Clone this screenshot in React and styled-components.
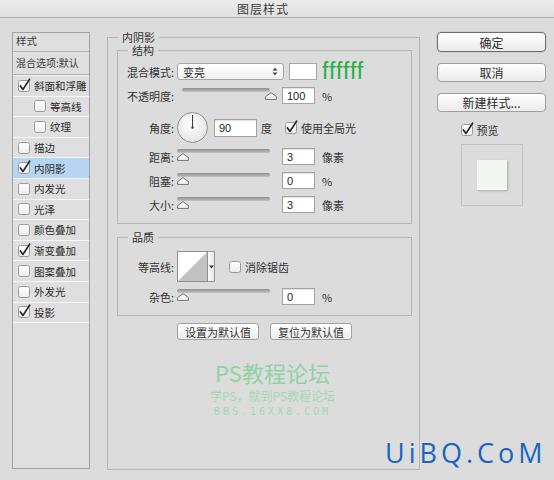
import React from 'react'
import styled, { createGlobalStyle } from 'styled-components'

const GlobalStyle = createGlobalStyle`
  html, body {
    margin: 0;
    padding: 0;
    background: #dcdcdc;
  }
  body {
    font-family: "Noto Sans CJK SC", "Liberation Sans", sans-serif;
    font-size: 11px;
    color: #2c2c2c;
  }
`

const effects = [
  { name: '斜面和浮雕', checked: true },
  { name: '等高线', sub: true },
  { name: '纹理', sub: true },
  { name: '描边' },
  { name: '内阴影', checked: true, active: true },
  { name: '内发光' },
  { name: '光泽' },
  { name: '颜色叠加' },
  { name: '渐变叠加', checked: true },
  { name: '图案叠加' },
  { name: '外发光' },
  { name: '投影', checked: true },
]

const Check = ({ on }) => (
  <CheckSvg width="12" height="12" viewBox="0 0 12 12">
    <defs>
      <linearGradient id="cbg" x1="0" y1="0" x2="0" y2="1">
        <stop offset="0" stopColor="#ffffff" />
        <stop offset="1" stopColor="#ececec" />
      </linearGradient>
    </defs>
    <rect x="0.5" y="0.5" width="11" height="11" rx="2" fill="url(#cbg)" stroke="#9a9a9a" />
    {on && <path d="M2.4 5.9 L5 9.4 L11.6 -0.8" fill="none" stroke="#262626" strokeWidth="1.7" strokeLinecap="round" strokeLinejoin="round" />}
  </CheckSvg>
)

const Slider = ({ width, thumb, offset }) => (
  <SliderWrap $w={width} $ml={offset}>
    <Track />
    <Thumb $right={thumb === 'right'} width="12" height="8" viewBox="0 0 12 8">
      <path d="M6 0.6 L11.4 4.6 L11.4 7.4 L0.6 7.4 L0.6 4.6 Z" fill="#f4f4f4" stroke="#6f6f6f" strokeLinejoin="round" />
    </Thumb>
  </SliderWrap>
)

const Dial = () => (
  <svg width="31" height="31" viewBox="0 0 31 31">
    <defs>
      <radialGradient id="dial" cx="0.45" cy="0.4" r="0.65">
        <stop offset="0" stopColor="#ffffff" />
        <stop offset="1" stopColor="#e2e2e2" />
      </radialGradient>
    </defs>
    <circle cx="15.5" cy="15.5" r="15" fill="url(#dial)" stroke="#8e8e8e" />
    <line x1="15.5" y1="15.5" x2="15.5" y2="3" stroke="#3a3a3a" strokeWidth="1" />
    <circle cx="15.5" cy="15.5" r="1.2" fill="#3a3a3a" />
  </svg>
)

const App = () => {
  return (
    <Window>
      <GlobalStyle />
      <TitleBar>图层样式</TitleBar>
      <Body>
        <StylePanel>
          <PanelHead>样式</PanelHead>
          <PanelBlend>混合选项:默认</PanelBlend>
          <EffectList>
            {effects.map((e) => (
              <EffectRow key={e.name} $sub={e.sub} $active={e.active}>
                <Check on={e.checked} />
                <span>{e.name}</span>
              </EffectRow>
            ))}
          </EffectList>
        </StylePanel>

        <Main>
          <GroupTitle $ml={1}>内阴影</GroupTitle>
          <Group>
            <GroupTitle $ml={6}>结构</GroupTitle>
            <Row $h={17}>
              <Label>混合模式:</Label>
              <Select>
                <span>变亮</span>
                <svg width="6" height="9" viewBox="0 0 6 9">
                  <path d="M0.5 3.5 L3 0.8 L5.5 3.5 Z M0.5 5.5 L3 8.2 L5.5 5.5 Z" fill="#444" />
                </svg>
              </Select>
              <Swatch />
              <ColorNote>ffffff</ColorNote>
            </Row>
            <Row $h={17} $mt={7}>
              <Label>不透明度:</Label>
              <Slider width={88} thumb="right" offset={5} />
              <NumBox defaultValue="100" readOnly />
              <Unit>%</Unit>
            </Row>
            <Row $h={31} $mt={8}>
              <Label>角度:</Label>
              <Dial />
              <NumBox $w={43} $h={18} $ml={6} defaultValue="90" readOnly />
              <Unit $ml={4}>度</Unit>
              <CheckLabel $ml={13}>
                <Check on />
                <span>使用全局光</span>
              </CheckLabel>
            </Row>
            <Row $h={17} $mt={5}>
              <Label>距离:</Label>
              <Slider width={93} />
              <NumBox defaultValue="3" readOnly />
              <Unit>像素</Unit>
            </Row>
            <Row $h={17} $mt={7}>
              <Label>阻塞:</Label>
              <Slider width={93} />
              <NumBox defaultValue="0" readOnly />
              <Unit>%</Unit>
            </Row>
            <Row $h={17} $mt={7}>
              <Label>大小:</Label>
              <Slider width={93} />
              <NumBox defaultValue="3" readOnly />
              <Unit>像素</Unit>
            </Row>
          </Group>

          <Group $mt={7} $pt={8}>
            <GroupTitle $ml={6}>品质</GroupTitle>
            <Row $h={31}>
              <Label>等高线:</Label>
              <Contour>
                <ContourBox>
                  <svg width="29" height="29" viewBox="0 0 29 29">
                    <polygon points="0,29 29,0 29,29" fill="#c2c2c2" />
                  </svg>
                </ContourBox>
                <ContourDrop>
                  <svg width="5" height="4" viewBox="0 0 5 4">
                    <path d="M0 0.5 L5 0.5 L2.5 3.5 Z" fill="#333" />
                  </svg>
                </ContourDrop>
              </Contour>
              <CheckLabel $ml={14}>
                <Check />
                <span>消除锯齿</span>
              </CheckLabel>
            </Row>
            <Row $h={17} $mt={6}>
              <Label>杂色:</Label>
              <Slider width={93} />
              <NumBox defaultValue="0" readOnly />
              <Unit>%</Unit>
            </Row>
          </Group>

          <ButtonRow>
            <SmallButton>设置为默认值</SmallButton>
            <SmallButton>复位为默认值</SmallButton>
          </ButtonRow>

          <Watermark>
            <MarkTitle>PS教程论坛</MarkTitle>
            <MarkLine>学PS，就到PS教程论坛</MarkLine>
            <MarkUrl>BBS.16XX8.COM</MarkUrl>
          </Watermark>
        </Main>

        <Side>
          <DialogButton $primary>确定</DialogButton>
          <DialogButton>取消</DialogButton>
          <DialogButton>新建样式...</DialogButton>
          <PreviewArea>
            <CheckLabel $h={14}>
              <Check on />
              <span>预览</span>
            </CheckLabel>
            <PreviewBox>
              <PreviewSquare />
            </PreviewBox>
          </PreviewArea>
        </Side>
      </Body>
      <SiteMark>UiBQ.CoM</SiteMark>
    </Window>
  )
}

const Window = styled.div`
  position: relative;
  width: 554px;
  height: 480px;
  overflow: hidden;
  background: #dcdcdc;
`

const TitleBar = styled.div`
  height: 17px;
  border-bottom: 1px solid #b2b2b2;
  background: linear-gradient(#ececec, #dfdfdf);
  display: flex;
  align-items: center;
  justify-content: center;
  padding-right: 28px;
  font-size: 12px;
  color: #3a3a3a;
  letter-spacing: 1px;
`

const Body = styled.div`
  display: flex;
  align-items: flex-start;
  padding-left: 12px;
`

const StylePanel = styled.div`
  width: 78px;
  height: 437px;
  margin-top: 14px;
  box-sizing: border-box;
  border: 1px solid #a2a2a2;
  background: #dfdfdf;
  display: flex;
  flex-direction: column;
  font-size: 10.5px;
  white-space: nowrap;
`

const PanelHead = styled.div`
  height: 19px;
  box-sizing: border-box;
  border-bottom: 1px solid #b3b3b3;
  padding: 0 0 3px 3px;
  display: flex;
  align-items: center;
  color: #3c3c3c;
`

const PanelBlend = styled(PanelHead)`
  height: 23px;
  padding: 0 0 1px 3px;
  font-size: 10px;
  box-shadow: 0 1px 0 #f2f2f2;
`

const EffectList = styled.div`
  margin-top: 1px;
  display: flex;
  flex-direction: column;
`

const EffectRow = styled.div`
  height: 20.6px;
  box-sizing: border-box;
  display: flex;
  align-items: center;
  gap: 4px;
  padding-left: ${(p) => (p.$sub ? 21 : 5)}px;
  background: ${(p) => (p.$active ? '#b7d5f3' : 'transparent')};
  border-bottom: 1px solid rgba(255, 255, 255, 0.75);
  color: #2a2a2a;
`

const CheckSvg = styled.svg`
  flex: none;
  overflow: visible;
`

const Main = styled.fieldset`
  width: 313px;
  height: 439px;
  margin: 13px 0 0 17px;
  padding: 1px 7px 0 9px;
  box-sizing: border-box;
  border: 1px solid #b6b6b6;
  min-width: 0;
`

const Group = styled.fieldset`
  margin: ${(p) => p.$mt || 0}px 0 0;
  padding: ${(p) => p.$pt || 7}px 0 10px 4px;
  border: 1px solid #b6b6b6;
  min-width: 0;
`

const GroupTitle = styled.legend`
  margin-left: ${(p) => p.$ml}px;
  padding: 0 4px;
  font-size: 11px;
  line-height: 12px;
  color: #333;
`

const Row = styled.div`
  height: ${(p) => p.$h}px;
  margin-top: ${(p) => p.$mt || 0}px;
  display: flex;
  align-items: center;
`

const Label = styled.span`
  width: 52px;
  margin-right: 3px;
  text-align: right;
  white-space: nowrap;
  color: #333;
`

const Select = styled.div`
  width: 107px;
  height: 17px;
  box-sizing: border-box;
  border: 1px solid #a6a6a6;
  border-radius: 3px;
  background: linear-gradient(#ffffff, #efefef);
  display: flex;
  align-items: center;
  justify-content: space-between;
  padding: 0 5px;
`

const Swatch = styled.div`
  width: 28px;
  height: 17px;
  margin-left: 5px;
  box-sizing: border-box;
  border: 1px solid #a6a6a6;
  background: #ffffff;
`

const ColorNote = styled.span`
  margin-left: 5px;
  font-family: "Liberation Sans", sans-serif;
  font-size: 23px;
  letter-spacing: 1px;
  color: #27b043;
  line-height: 17px;
`

const SliderWrap = styled.div`
  position: relative;
  width: ${(p) => p.$w}px;
  height: 17px;
  margin-left: ${(p) => p.$ml || 0}px;
  margin-right: 12px;
`

const Track = styled.div`
  margin-top: 1px;
  height: 4px;
  border-radius: 2px;
  background: linear-gradient(#8e8e8e, #c4c4c4);
`

const Thumb = styled.svg`
  position: absolute;
  top: 5px;
  left: ${(p) => (p.$right ? 'auto' : '0')};
  right: ${(p) => (p.$right ? '-7px' : 'auto')};
`

const NumBox = styled.input`
  width: ${(p) => p.$w || 33}px;
  height: ${(p) => p.$h || 17}px;
  margin: 0 0 0 ${(p) => p.$ml || 0}px;
  box-sizing: border-box;
  border: 1px solid #a3a3a3;
  box-shadow: inset 0 1px 1px rgba(0, 0, 0, 0.12);
  background: #ffffff;
  padding: 0 4px;
  font-family: "Liberation Sans", sans-serif;
  font-size: 11px;
  color: #222;
  outline: none;
`

const Unit = styled.span`
  margin-left: ${(p) => p.$ml || 7}px;
  color: #333;
`

const CheckLabel = styled.label`
  display: flex;
  align-items: center;
  gap: 4px;
  height: ${(p) => (p.$h ? `${p.$h}px` : 'auto')};
  margin-left: ${(p) => p.$ml || 0}px;
  color: #333;
`

const Contour = styled.div`
  display: flex;
  height: 31px;
`

const ContourBox = styled.div`
  width: 31px;
  height: 31px;
  box-sizing: border-box;
  border: 1px solid #8e8e8e;
  background: #ffffff;
  svg {
    display: block;
  }
`

const ContourDrop = styled.div`
  width: 7px;
  height: 31px;
  box-sizing: border-box;
  border: 1px solid #9a9a9a;
  border-left: none;
  background: linear-gradient(90deg, #fafafa, #e8e8e8);
  display: flex;
  align-items: center;
  justify-content: center;
`

const ButtonRow = styled.div`
  display: flex;
  justify-content: center;
  gap: 11px;
  margin-top: 7px;
`

const SmallButton = styled.div`
  width: 82px;
  height: 17px;
  box-sizing: border-box;
  border: 1px solid #a2a2a2;
  border-radius: 3px;
  background: linear-gradient(#ffffff, #ededed);
  display: flex;
  align-items: center;
  justify-content: center;
  color: #333;
`

const Watermark = styled.div`
  margin-top: 20px;
  padding-left: 16px;
  display: flex;
  flex-direction: column;
  align-items: center;
`

const MarkTitle = styled.div`
  font-size: 22px;
  line-height: 24px;
  color: #8fd3a4;
`

const MarkLine = styled.div`
  margin-top: 5px;
  font-size: 12px;
  line-height: 14px;
  color: #a3dab5;
`

const MarkUrl = styled.div`
  margin-top: 2px;
  font-family: "DejaVu Sans Mono", monospace;
  font-size: 10px;
  line-height: 13px;
  letter-spacing: 3px;
  color: #a3dab5;
`

const Side = styled.div`
  width: 109px;
  margin: 14px 0 0 17px;
  display: flex;
  flex-direction: column;
  gap: 11px;
`

const DialogButton = styled.div`
  height: ${(p) => (p.$primary ? 20 : 19)}px;
  box-sizing: border-box;
  border: 1px solid ${(p) => (p.$primary ? '#6c6c6c' : '#9e9e9e')};
  border-radius: 4px;
  background: linear-gradient(#ffffff, #ebebeb);
  box-shadow: ${(p) => (p.$primary ? '0 0 0 1px #cfcfcf' : 'none')};
  display: flex;
  align-items: center;
  justify-content: center;
  font-size: 12px;
  color: #2c2c2c;
`

const PreviewArea = styled.div`
  align-self: center;
  width: 62px;
  display: flex;
  flex-direction: column;
  gap: 7px;
`

const PreviewBox = styled.div`
  width: 62px;
  height: 62px;
  box-sizing: border-box;
  border: 1px solid #c2c2c2;
  display: flex;
  align-items: center;
  justify-content: center;
`

const PreviewSquare = styled.div`
  width: 30px;
  height: 30px;
  background: #f2f5f2;
  box-shadow: 1px 1px 2px rgba(60, 80, 60, 0.35);
`

const SiteMark = styled.div`
  position: absolute;
  left: 385px;
  top: 436px;
  font-family: "Open Sans", sans-serif;
  font-size: 27px;
  line-height: 34px;
  letter-spacing: 4px;
  color: #1765c4;
`

export default App
